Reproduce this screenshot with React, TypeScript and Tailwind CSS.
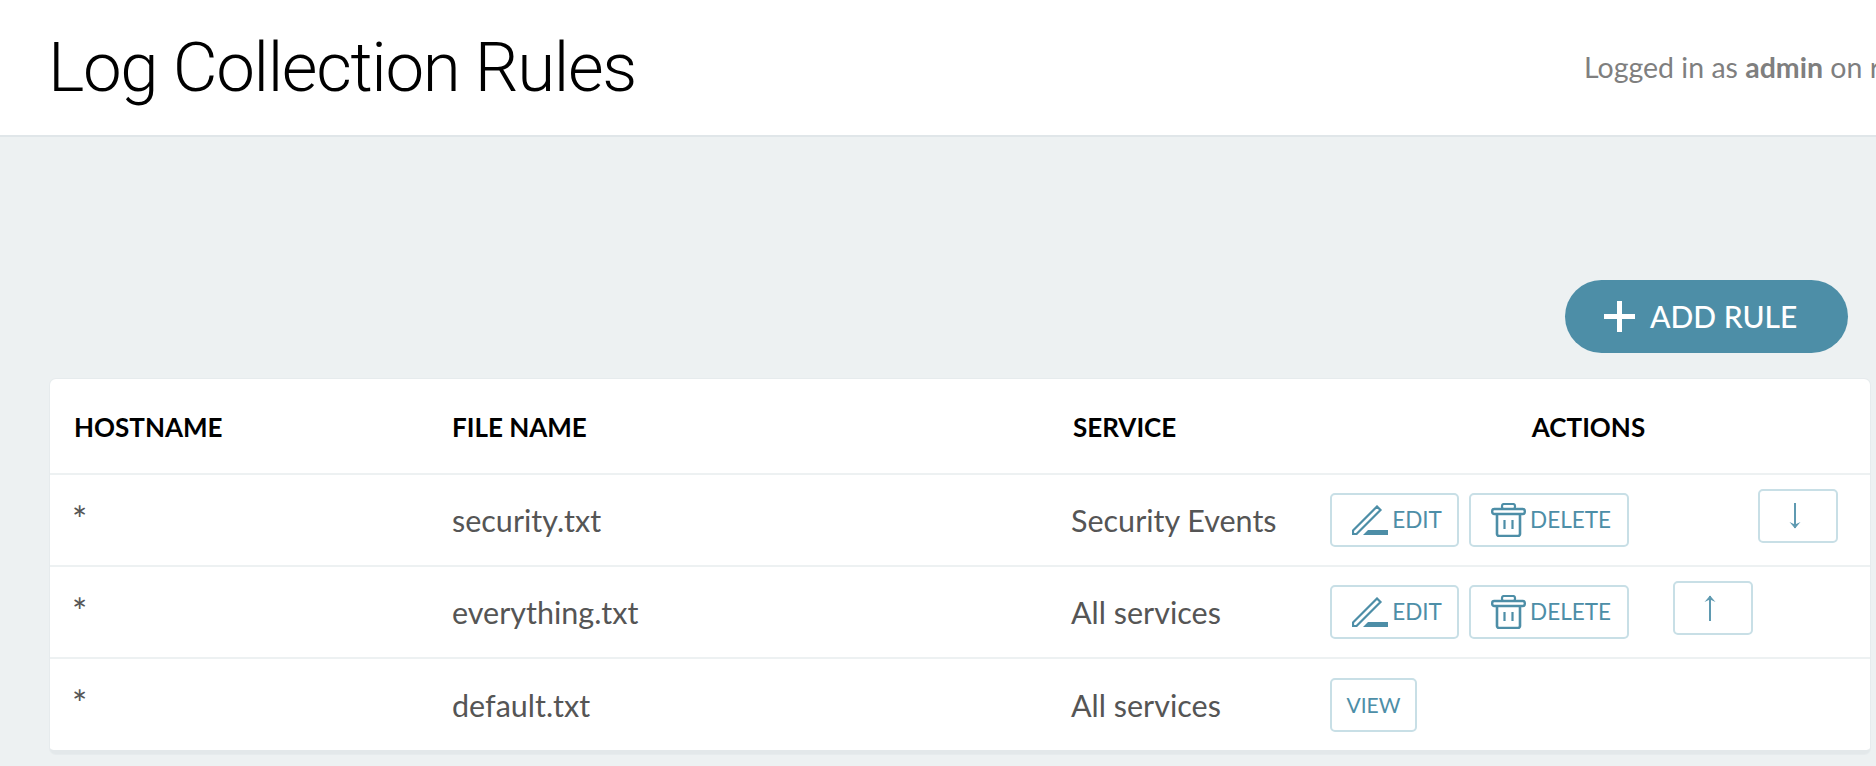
const font = { fontFamily: '"Lato", "Noto Sans", sans-serif' };

const PencilIcon = () => (
  <svg width="36" height="30" viewBox="0 0 36 30" fill="none" className="shrink-0">
    <path d="M1 29V25.5L25 1.5L28.5 5L4.5 29H1Z" stroke="#4d8ea7" strokeWidth="2.2" />
    <path d="M11 30L16 25H36V30H11Z" fill="#4d8ea7" />
  </svg>
);

const TrashIcon = () => (
  <svg width="35" height="34" viewBox="0 0 35 34" fill="none" className="shrink-0">
    <rect x="11" y="1" width="13" height="5" rx="2" stroke="#4d8ea7" strokeWidth="2.2" />
    <rect x="1.2" y="6" width="32.6" height="5" rx="2" stroke="#4d8ea7" strokeWidth="2.4" />
    <path d="M6 11V31C6 32 7 33 8 33H27C28 33 29 32 29 31V11" stroke="#4d8ea7" strokeWidth="2.6" />
    <path d="M13.5 17V26M21.5 17V26" stroke="#4d8ea7" strokeWidth="2.2" />
  </svg>
);

const ArrowIcon = ({ up }: { up?: boolean }) => (
  <svg width="14" height="28" viewBox="0 0 14 28" fill="none" className={up ? "mr-[6px]" : "rotate-180 mr-[6px]"}>
    <path d="M7 2V27" stroke="#5f9ab1" strokeWidth="2" />
    <path d="M1.5 8L7 1.5L12.5 8L7 5.5Z" fill="#5f9ab1" />
  </svg>
);

const ActionButton = ({ className, children }: { className: string; children: React.ReactNode }) => (
  <button className={"flex items-center justify-center h-[54px] border-2 border-[#c8dfe6] rounded-[5px] bg-white text-[22.5px] text-[#4d8ea7] shrink-0 " + className}>
    {children}
  </button>
);

const EditDelete = () => (
  <>
    <ActionButton className="w-[129px] gap-[4px] pl-[5px]">
      <PencilIcon />
      <span>EDIT</span>
    </ActionButton>
    <ActionButton className="w-[160px] ml-[10px] gap-[4px] pl-[4px]">
      <TrashIcon />
      <span>DELETE</span>
    </ActionButton>
  </>
);

const Row = ({ file, service, height, children }: { file: string; service: string; height: string; children: React.ReactNode }) => (
  <div className={"grid grid-cols-[378px_619px_260px_1fr] items-center " + height}>
    <span className="pl-[22px] pb-[3px] text-[36px] leading-none text-[#555555]">*</span>
    <span className="pl-[24px] pt-[2px] text-[30.5px] text-[#555555]">{file}</span>
    <span className="pl-[24px] pt-[2px] text-[30.5px] text-[#555555]">{service}</span>
    <div className="flex items-center pl-[23px]">{children}</div>
  </div>
);

export default function App() {
  return (
    <div className="h-screen w-full overflow-hidden bg-[#edf1f2]" style={font}>
      <header className="flex items-center justify-between h-[137px] bg-white border-b-2 border-[#e0e6e9] pl-[48px] overflow-hidden">
        <h1 className="text-[69px] font-light tracking-[-1.35px] text-black whitespace-nowrap" style={{ fontFamily: '"Roboto", sans-serif' }}>
          Log Collection Rules
        </h1>
        <p className="w-[292px] shrink-0 whitespace-nowrap text-[28.5px] text-[#7f7f7f]">
          Logged in as <b className="font-bold">admin</b> on r
        </p>
      </header>

      <main className="pl-[50px] pr-[6px] pt-[143px]">
        <div className="flex justify-end pr-[22px] mb-[26px]">
          <button className="flex items-center gap-[15px] h-[73px] w-[283px] pl-[39px] rounded-full bg-[#4d8ea7] text-white text-[30px] font-medium">
            <svg width="31" height="31" viewBox="0 0 31 31" fill="none">
              <path d="M15.5 0V31M0 15.5H31" stroke="white" strokeWidth="5" />
            </svg>
            ADD RULE
          </button>
        </div>

        <div className="bg-white rounded-[6px] border-b-4 border-[#e3e8ea] shadow-[0_0_0_1px_#e6ebed] overflow-hidden divide-y-2 divide-[#edf1f2]">
          <div className="grid grid-cols-[378px_619px_260px_1fr] items-center h-[96px] pt-[2px] text-[26px] font-bold text-black">
            <span className="pl-[24px]">HOSTNAME</span>
            <span className="pl-[24px]">FILE NAME</span>
            <span className="pl-[26px]">SERVICE</span>
            <span className="text-center">ACTIONS</span>
          </div>
          <Row file="security.txt" service="Security Events" height="h-[92px]">
            <EditDelete />
            <ActionButton className="w-[80px] ml-[129px] mb-[9px]">
              <ArrowIcon />
            </ActionButton>
          </Row>
          <Row file="everything.txt" service="All services" height="h-[92px]">
            <EditDelete />
            <ActionButton className="w-[80px] ml-[44px] mb-[8px]">
              <ArrowIcon up />
            </ActionButton>
          </Row>
          <Row file="default.txt" service="All services" height="h-[91px]">
            <ActionButton className="w-[87px]">
              <span className="text-[21px]">VIEW</span>
            </ActionButton>
          </Row>
        </div>
      </main>
    </div>
  );
}
